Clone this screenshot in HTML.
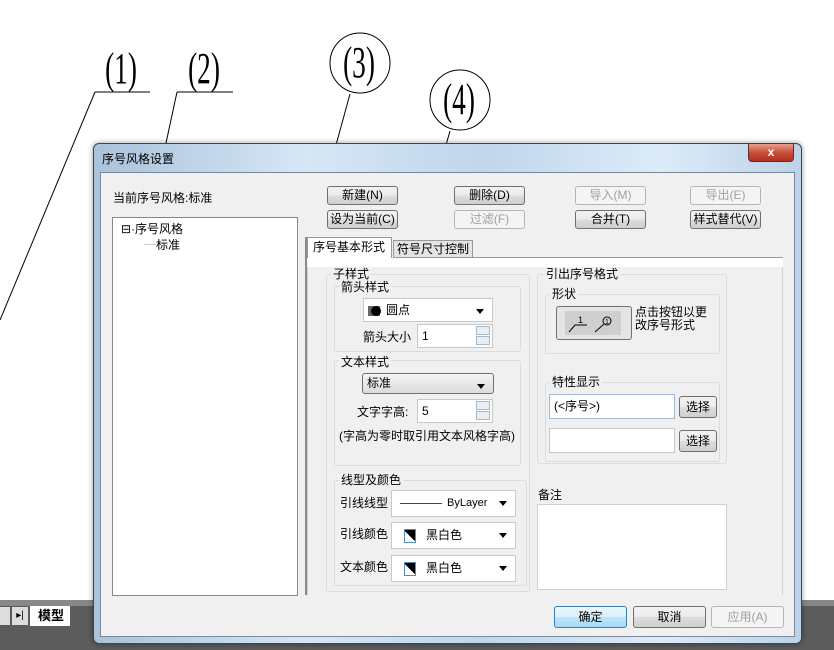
<!DOCTYPE html>
<html><head><meta charset="utf-8"><style>
*{box-sizing:border-box;margin:0;padding:0}
body{width:834px;height:650px;overflow:hidden;background:#fff;position:relative;font-family:"Liberation Sans","Noto Sans CJK SC",sans-serif;font-size:12px;color:#000}
.a{position:absolute}
.btn{position:absolute;height:19px;border:1px solid #707070;border-radius:3px;background:linear-gradient(#f2f2f2,#ebebeb 50%,#dddddd 51%,#cfcfcf);text-align:center;line-height:17px;font-size:12px}
.dis{color:#a0a0a0;border-color:#b5b5b5;background:#f4f4f4}
.grp{position:absolute;border:1px solid #dcdcdc;border-radius:3px}
.lbl{position:absolute;background:#f0f0f0;padding:0 2px;line-height:14px}
.in{position:absolute;background:#fff;border:1px solid #c8c8c8;height:24px;line-height:22px;padding-left:4px}
.dd::after{content:"";position:absolute;right:8px;top:10px;border:4px solid transparent;border-top:5px solid #000}
.sp{position:absolute;right:2px;width:14px;height:20px;top:1px}
.sp i{display:block;height:9px;margin-bottom:1px;border:1px solid #a8b8c8;background:#e8eef4}
</style></head><body>
<svg class="a" style="left:0;top:0" width="834" height="650">
<g stroke="#000" stroke-width="1" fill="none">
<line x1="95" y1="92" x2="150" y2="92"/><line x1="95" y1="92" x2="0" y2="320"/>
<line x1="177" y1="92" x2="233" y2="92"/><line x1="177" y1="92" x2="166" y2="143"/>
<circle cx="360" cy="63" r="30"/><line x1="350" y1="94" x2="336" y2="145"/>
<circle cx="460" cy="100" r="30"/><line x1="450" y1="131" x2="446" y2="145"/>
</g>
<g font-family="Liberation Serif,serif" font-size="44" text-anchor="middle">
<text transform="translate(121,83) scale(0.62,1)">(1)</text>
<text transform="translate(204,83) scale(0.62,1)">(2)</text>
<text transform="translate(359,77) scale(0.62,1)">(3)</text>
<text transform="translate(459,114) scale(0.62,1)">(4)</text>
</g>
</svg>
<!-- bottom bar -->
<div class="a" style="left:0;top:606px;width:834px;height:44px;background:#5c5c5c"></div>
<div class="a" style="left:0;top:600px;width:834px;height:6px;background:#888"></div>
<div class="a" style="left:0;top:607px;width:10px;height:18px;background:#ddd"></div>
<div class="a" style="left:12px;top:607px;width:16px;height:18px;background:#ddd;font-size:10px;text-align:center;line-height:18px">▸|</div>
<div class="a" style="left:30px;top:606px;width:40px;height:20px;background:#fff;font-weight:bold;font-size:13px;line-height:20px;padding-left:8px">模型</div>
<!-- dialog -->
<div class="a" style="left:93px;top:143px;width:709px;height:501px;border:1px solid #444;border-radius:6px;background:linear-gradient(90deg,#a9c3dc,#d6e6f5 30%,#c0d6ec 55%,#dcebf8 80%,#bcd2e8);box-shadow:0 0 6px rgba(0,0,0,.4)"></div>
<div class="a" style="left:102px;top:150px;font-size:12px">序号风格设置</div>
<div class="a" style="left:748px;top:143px;width:46px;height:19px;border:1px solid #6a2a20;border-radius:0 0 4px 4px;background:linear-gradient(#e8a090,#c8503a 50%,#b03020);color:#fff;text-align:center;font-weight:bold;line-height:17px">x</div>
<div class="a" style="left:100px;top:172px;width:695px;height:465px;background:#f0f0f0;border:1px solid #7a8a9a"></div>
<div class="a" style="left:113px;top:189px">当前序号风格:标准</div>
<div class="a" style="left:112px;top:217px;width:186px;height:379px;background:#fff;border:1px solid #828790"></div>
<div class="a" style="left:121px;top:220px">⊟·序号风格</div>
<div class="a" style="left:144px;top:236px;color:#888">┈</div>
<div class="a" style="left:156px;top:236px">标准</div>
<div class="btn" style="left:327px;top:186px;width:71px">新建(N)</div>
<div class="btn" style="left:454px;top:186px;width:71px">删除(D)</div>
<div class="btn dis" style="left:575px;top:186px;width:71px">导入(M)</div>
<div class="btn dis" style="left:690px;top:186px;width:71px">导出(E)</div>
<div class="btn" style="left:327px;top:210px;width:71px">设为当前(C)</div>
<div class="btn dis" style="left:454px;top:210px;width:71px">过滤(F)</div>
<div class="btn" style="left:575px;top:210px;width:71px">合并(T)</div>
<div class="btn" style="left:690px;top:210px;width:71px">样式替代(V)</div>
<!-- tabs -->
<div class="a" style="left:305px;top:237px;width:2px;height:358px;background:#8a8a8a"></div>
<div class="a" style="left:307px;top:257px;width:476px;height:338px;background:#f0f0f0;border:1px solid #d0d0d0;border-bottom:none"></div>
<div class="a" style="left:307px;top:257px;width:476px;height:10px;background:#fff"></div>
<div class="a" style="left:307px;top:237px;width:85px;height:21px;background:#fff;border:1px solid #999;border-bottom:none;line-height:19px;padding-left:5px">序号基本形式</div>
<div class="a" style="left:393px;top:240px;width:80px;height:18px;background:#e4e4e4;border:1px solid #999;line-height:16px;padding-left:3px">符号尺寸控制</div>
<div class="a" style="left:473px;top:257px;width:310px;height:1px;background:#999"></div>
<!-- left groups -->
<div class="grp" style="left:326px;top:274px;width:204px;height:318px"></div>
<div class="lbl" style="left:331px;top:267px">子样式</div>
<div class="grp" style="left:334px;top:286px;width:187px;height:66px"></div>
<div class="lbl" style="left:339px;top:280px">箭头样式</div>
<div class="in dd" style="left:363px;top:298px;width:130px;padding-left:22px">圆点<span class="a" style="left:4px;top:7px;width:12px;height:10px;background:#666"></span><span class="a" style="left:7px;top:7px;width:10px;height:10px;border-radius:5px;background:#000"></span></div>
<div class="a" style="left:363px;top:328px">箭头大小</div>
<div class="in" style="left:417px;top:324px;width:76px">1<span class="sp"><i></i><i></i></span></div>
<div class="grp" style="left:334px;top:360px;width:187px;height:106px"></div>
<div class="lbl" style="left:339px;top:355px">文本样式</div>
<div class="in dd" style="left:362px;top:373px;width:132px;height:21px;line-height:19px;background:linear-gradient(#f4f4f4,#dcdcdc);border-color:#707070;border-radius:3px">标准</div>
<div class="a" style="left:357px;top:403px">文字字高:</div>
<div class="in" style="left:417px;top:399px;width:76px">5<span class="sp"><i></i><i></i></span></div>
<div class="a" style="left:339px;top:427px">(字高为零时取引用文本风格字高)</div>
<div class="grp" style="left:334px;top:480px;width:193px;height:106px"></div>
<div class="lbl" style="left:339px;top:473px">线型及颜色</div>
<div class="a" style="left:340px;top:494px">引线线型</div>
<div class="in dd" style="left:391px;top:490px;width:125px;height:27px;font-size:11px;padding-left:55px;line-height:25px">ByLayer<span class="a" style="left:8px;top:12px;width:42px;height:1px;background:#a02020"></span></div>
<div class="a" style="left:340px;top:525px">引线颜色</div>
<div class="in dd" style="left:391px;top:522px;width:125px;height:27px;line-height:25px;padding-left:34px">黑白色<span class="a" style="left:12px;top:6px;width:12px;height:14px;border:1px solid #5a8ab8;background:linear-gradient(45deg,transparent 50%,#000 50%)"></span></div>
<div class="a" style="left:340px;top:558px">文本颜色</div>
<div class="in dd" style="left:391px;top:555px;width:125px;height:27px;line-height:25px;padding-left:34px">黑白色<span class="a" style="left:12px;top:6px;width:12px;height:14px;border:1px solid #5a8ab8;background:linear-gradient(45deg,transparent 50%,#000 50%)"></span></div>
<!-- right groups -->
<div class="grp" style="left:537px;top:274px;width:190px;height:190px"></div>
<div class="lbl" style="left:544px;top:267px">引出序号格式</div>
<div class="grp" style="left:545px;top:294px;width:175px;height:60px"></div>
<div class="lbl" style="left:550px;top:287px">形状</div>
<div class="a" style="left:556px;top:306px;width:76px;height:34px;border:1px solid #707070;border-radius:3px;background:#e4e4e4">
<svg width="74" height="32"><rect x="8" y="4" width="56" height="24" fill="#cfcfcf"/><g stroke="#000" fill="none" stroke-width="1"><polyline points="12,25 18,18 30,18"/><circle cx="50" cy="14" r="4"/><line x1="38" y1="25" x2="47" y2="17"/></g><text x="21" y="16" font-size="9">1</text><text x="48" y="17" font-size="7">1</text></svg></div>
<div class="a" style="left:635px;top:306px;line-height:13px">点击按钮以更<br>改序号形式</div>
<div class="grp" style="left:545px;top:382px;width:175px;height:80px"></div>
<div class="lbl" style="left:550px;top:375px">特性显示</div>
<div class="in" style="left:549px;top:394px;width:126px;height:25px;border-color:#a0b8d0">(&lt;序号&gt;)</div>
<div class="btn" style="left:679px;top:396px;width:38px;height:22px;line-height:20px">选择</div>
<div class="in" style="left:549px;top:428px;width:126px;height:25px"></div>
<div class="btn" style="left:679px;top:430px;width:38px;height:22px;line-height:20px">选择</div>
<div class="a" style="left:538px;top:486px">备注</div>
<div class="a" style="left:537px;top:504px;width:190px;height:86px;background:#fff;border:1px solid #d0d0d0"></div>
<!-- bottom buttons -->
<div class="btn" style="left:554px;top:606px;width:73px;height:22px;line-height:20px;border-color:#3c7fb1;background:linear-gradient(#eaf6fd,#d9f0fc 50%,#bee6fd 51%,#a7d9f5)">确定</div>
<div class="btn" style="left:633px;top:606px;width:73px;height:22px;line-height:20px">取消</div>
<div class="btn dis" style="left:711px;top:606px;width:73px;height:22px;line-height:20px">应用(A)</div>
</body></html>
